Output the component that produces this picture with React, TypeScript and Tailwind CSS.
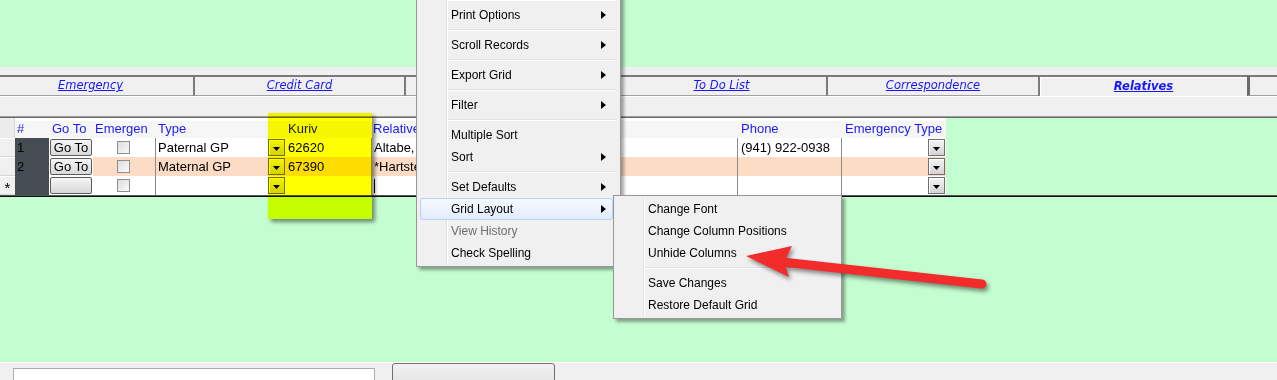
import React from "react";

const RightTri = () => (
  <svg width="5" height="8" viewBox="0 0 5 8" className="shrink-0">
    <path d="M0 0L5 4L0 8Z" fill="#000" />
  </svg>
);

const DD = () => (
  <div className="w-[17px] h-[17px] shrink-0 border border-[#6f6f6f] bg-linear-to-b from-[#f4f4f4] to-[#d4d4d4] shadow-[inset_1px_1px_0_#ffffff] flex items-center justify-center">
    <svg width="7" height="4" viewBox="0 0 7 4" className="mt-[2px]">
      <path d="M0 0H7L3.5 4Z" fill="#000" />
    </svg>
  </div>
);

const GoBtn = ({ label }: { label: string }) => (
  <div className="w-[42px] h-[17px] ml-[1px] border border-[#5c5c5c] rounded-[2px] bg-linear-to-b from-[#f6f6f6] to-[#d8d8d8] flex items-center justify-center text-black leading-none">
    {label}
  </div>
);

const Check = () => (
  <div className="w-[13px] h-[13px] border border-[#8e8f8f] bg-linear-to-br from-[#dcdcdc] to-[#fbfbfb]" />
);

type MI = { label?: string; sub?: boolean; sep?: boolean; disabled?: boolean; active?: boolean };

const mainMenu: MI[] = [
  { sep: true },
  { label: "Print Options", sub: true },
  { sep: true },
  { label: "Scroll Records", sub: true },
  { sep: true },
  { label: "Export Grid", sub: true },
  { sep: true },
  { label: "Filter", sub: true },
  { sep: true },
  { label: "Multiple Sort" },
  { label: "Sort", sub: true },
  { sep: true },
  { label: "Set Defaults", sub: true },
  { label: "Grid Layout", sub: true, active: true },
  { label: "View History", disabled: true },
  { label: "Check Spelling" },
];

const subMenu: MI[] = [
  { label: "Change Font" },
  { label: "Change Column Positions" },
  { label: "Unhide Columns" },
  { sep: true },
  { label: "Save Changes" },
  { label: "Restore Default Grid" },
];

function MenuList({ items }: { items: MI[] }) {
  return (
    <div className="relative">
      <div className="absolute left-[27px] top-0 bottom-0 w-px bg-[#e2e3e3]" />
      <div className="absolute left-[28px] top-0 bottom-0 w-px bg-white" />
      {items.map((it, i) => {
        if (it.sep)
          return (
            <div key={i} className="h-[8px] flex flex-col justify-center ml-[28px] mr-[2px]">
              <div className="h-px bg-[#e0e0e0]" />
              <div className="h-px bg-white" />
            </div>
          );
        if (it.active)
          return (
            <div
              key={i}
              className="relative h-[22px] ml-[1px] mr-[5px] rounded-[3px] border border-[#b6d3f7] bg-linear-to-b from-[#f6faff] to-[#e2ecfa] flex items-center justify-between pl-[30px] pr-[6px]"
            >
              <span>{it.label}</span>
              {it.sub && <RightTri />}
            </div>
          );
        return (
          <div
            key={i}
            className={`relative h-[22px] flex items-center justify-between pl-[32px] pr-[12px] ${
              it.disabled ? "text-[#6d6d6d]" : "text-black"
            }`}
          >
            <span>{it.label}</span>
            {it.sub && <RightTri />}
          </div>
        );
      })}
    </div>
  );
}

function Tab({ w, label, active, first, next }: { w: string; label?: string; active?: boolean; first?: boolean; next?: boolean }) {
  return (
    <div
      className={`${w} shrink-0 h-[21px] border-t-2 border-[#7b7b7b] ${first ? "" : next ? "border-l-[3px] border-l-[#6a6a6a]" : "border-l-2 border-l-[#7b7b7b]"} ${
        active ? "bg-[#f0f0f0] shadow-[inset_1px_1px_0_#ffffff]" : "border-b border-b-[#a0a0a0] bg-[#f0f0f0]"
      } flex items-center justify-center ${first ? "pr-[12px]" : ""}`}
    >
      {label && (
        <span className={`italic underline text-[#1616ff] ${active ? "font-bold" : ""}`}>{label}</span>
      )}
    </div>
  );
}

function Row({
  n,
  type,
  kur,
  rel,
  phone,
  bg,
  goBg,
  star,
  cursor,
}: {
  n: string;
  type: string;
  kur: string;
  rel: string;
  phone: string;
  bg: string;
  goBg: string;
  star?: boolean;
  cursor?: boolean;
}) {
  return (
    <div className="flex h-[19px]">
      <div className="w-[15px] shrink-0 bg-[#f0f0f0] border-b border-[#d6d6d6] shadow-[inset_0_1px_0_#ffffff] flex items-center justify-center text-[15px] leading-none pt-[4px]">
        {star ? "*" : ""}
      </div>
      <div className="w-[34px] shrink-0 bg-[#434d52] pl-[2px] flex items-center text-black">{n}</div>
      <div className={`w-[44px] shrink-0 ${goBg} flex items-center`}>
        <GoBtn label={n ? "Go To" : ""} />
      </div>
      <div className={`w-[62px] shrink-0 ${bg} flex items-center justify-center pr-[1px]`}>
        <Check />
      </div>
      <div className={`w-[130px] shrink-0 ${bg} border-l border-[#8c8c8c] flex items-center justify-between pl-[2px]`}>
        <span>{type}</span>
        <DD />
      </div>
      <div className={`w-[86px] shrink-0 ${bg} flex items-center pl-[3px]`}>{kur}</div>
      <div className={`w-[366px] shrink-0 ${bg} border-l border-[#8c8c8c] flex items-center pl-[2px]`}>
        {cursor ? (
          <div className="w-px h-[14px] bg-black" />
        ) : (
          <span className="block w-[42px] overflow-hidden whitespace-nowrap">{rel}</span>
        )}
      </div>
      <div className={`w-[104px] shrink-0 ${bg} border-l border-[#8c8c8c] flex items-center pl-[3px]`}>{phone}</div>
      <div className={`w-[105px] shrink-0 ${bg} border-l border-[#8c8c8c] flex items-center justify-end pr-[1px]`}>
        <DD />
      </div>
    </div>
  );
}

export default function App() {
  return (
    <div className="relative w-[1277px] h-[380px] overflow-hidden bg-[#c4fdd0] font-['Liberation_Sans',Arial,sans-serif] text-[13px] text-black">
      {/* top green area */}
      <div className="h-[67px]" />

      {/* tab section */}
      <div className="bg-[#f0f0f0] font-['DejaVu_Sans',Verdana,sans-serif] text-[11.5px]">
        <div className="h-[8px]" />
        <div className="flex h-[21px] overflow-hidden">
          <Tab w="w-[193px]" label="Emergency" first />
          <Tab w="w-[211px]" label="Credit Card" />
          <Tab w="w-[211px]" />
          <Tab w="w-[211px]" label="To Do List" />
          <Tab w="w-[212px]" label="Correspondence" />
          <Tab w="w-[209px]" label="Relatives" active />
          <Tab w="w-[60px]" next />
        </div>
        <div className="h-px bg-white" />
        <div className="h-[19px]" />
        <div className="h-px bg-[#a0a0a0]" />
        <div className="h-px bg-[#696969]" />
      </div>

      {/* grid */}
      <div className="flex">
        <div className="w-[946px] shrink-0">
          <div className="flex h-[20px] bg-[#f6f6f6] text-[#1c1cf2] shadow-[inset_0_3px_0_#ffffff]">
            <div className="w-[15px] shrink-0 bg-[#ececec] border-r border-[#d6d6d6]" />
            <div className="w-[34px] shrink-0 pl-[2px] flex items-center pt-[2px]">#</div>
            <div className="w-[44px] shrink-0 pl-[3px] flex items-center pt-[2px]">Go To</div>
            <div className="w-[62px] shrink-0 pl-[2px] flex items-center pt-[2px]">Emergen</div>
            <div className="w-[130px] shrink-0 pl-[3px] flex items-center pt-[2px]">Type</div>
            <div className="w-[86px] shrink-0 pl-[3px] flex items-center pt-[2px]">Kuriv</div>
            <div className="w-[366px] shrink-0 pl-[2px] flex items-center pt-[2px]">
              <span className="block w-[43px] overflow-hidden whitespace-nowrap">Relative</span>
            </div>
            <div className="w-[104px] shrink-0 pl-[4px] flex items-center pt-[2px]">Phone</div>
            <div className="w-[105px] shrink-0 pl-[4px] flex items-center pt-[2px] whitespace-nowrap">Emergency Type</div>
          </div>
          <Row n="1" type="Paternal GP" kur="62620" rel="Altabe, Jacob" phone="(941) 922-0938" bg="bg-white" goBg="bg-white" />
          <Row n="2" type="Maternal GP" kur="67390" rel="*Hartstein, Ruth" phone="" bg="bg-[#fddcc5]" goBg="bg-white" />
          <Row n="" type="" kur="" rel="" phone="" bg="bg-white" goBg="bg-white" star cursor />
        </div>
        <div className="flex-1" />
      </div>
      <div className="h-px bg-[#555]" />
      <div className="h-px bg-[#111]" />

      {/* green middle */}
      <div className="h-[165px]" />

      {/* bottom bar */}
      <div className="h-[18px] bg-[#f0f0f0] border-t border-white flex items-start">
        <div className="ml-[13px] mt-[5px] w-[362px] h-[20px] bg-white border border-[#abadb3]" />
        <div className="ml-[17px] w-[163px] h-[20px] border border-[#707070] rounded-t-[3px] bg-linear-to-b from-[#f2f2f2] to-[#e6e6e6]" />
      </div>

      {/* yellow highlight annotation */}
      <div className="absolute left-[268px] top-[113px] w-[104px] h-[106px] bg-[#ffff00] mix-blend-multiply shadow-[3px_3px_4px_rgba(0,0,0,0.45)]" />

      {/* context menu */}
      <div className="absolute left-[416px] top-[-7px] w-[205px] bg-[#f0f0f0] border border-[#979797] p-[2px] shadow-[3px_3px_3px_rgba(0,0,0,0.35)] text-[12px]">
        <MenuList items={mainMenu} />
      </div>

      {/* submenu */}
      <div className="absolute left-[613px] top-[195px] w-[229px] bg-[#f0f0f0] border border-[#979797] p-[2px] shadow-[3px_3px_3px_rgba(0,0,0,0.35)] text-[12px]">
        <MenuList items={subMenu} />
      </div>

      {/* red arrow annotation */}
      <svg
        className="absolute left-[740px] top-[240px]"
        width="260"
        height="60"
        viewBox="0 0 260 60"
        style={{ filter: "drop-shadow(2px 3px 2px rgba(0,0,0,0.45))" }}
      >
        <line x1="42" y1="22" x2="242" y2="44" stroke="#f22b2b" strokeWidth="9" strokeLinecap="round" />
        <path d="M6 16 L52 6 L44 22 L49 37 Z" fill="#f22b2b" />
      </svg>
    </div>
  );
}
